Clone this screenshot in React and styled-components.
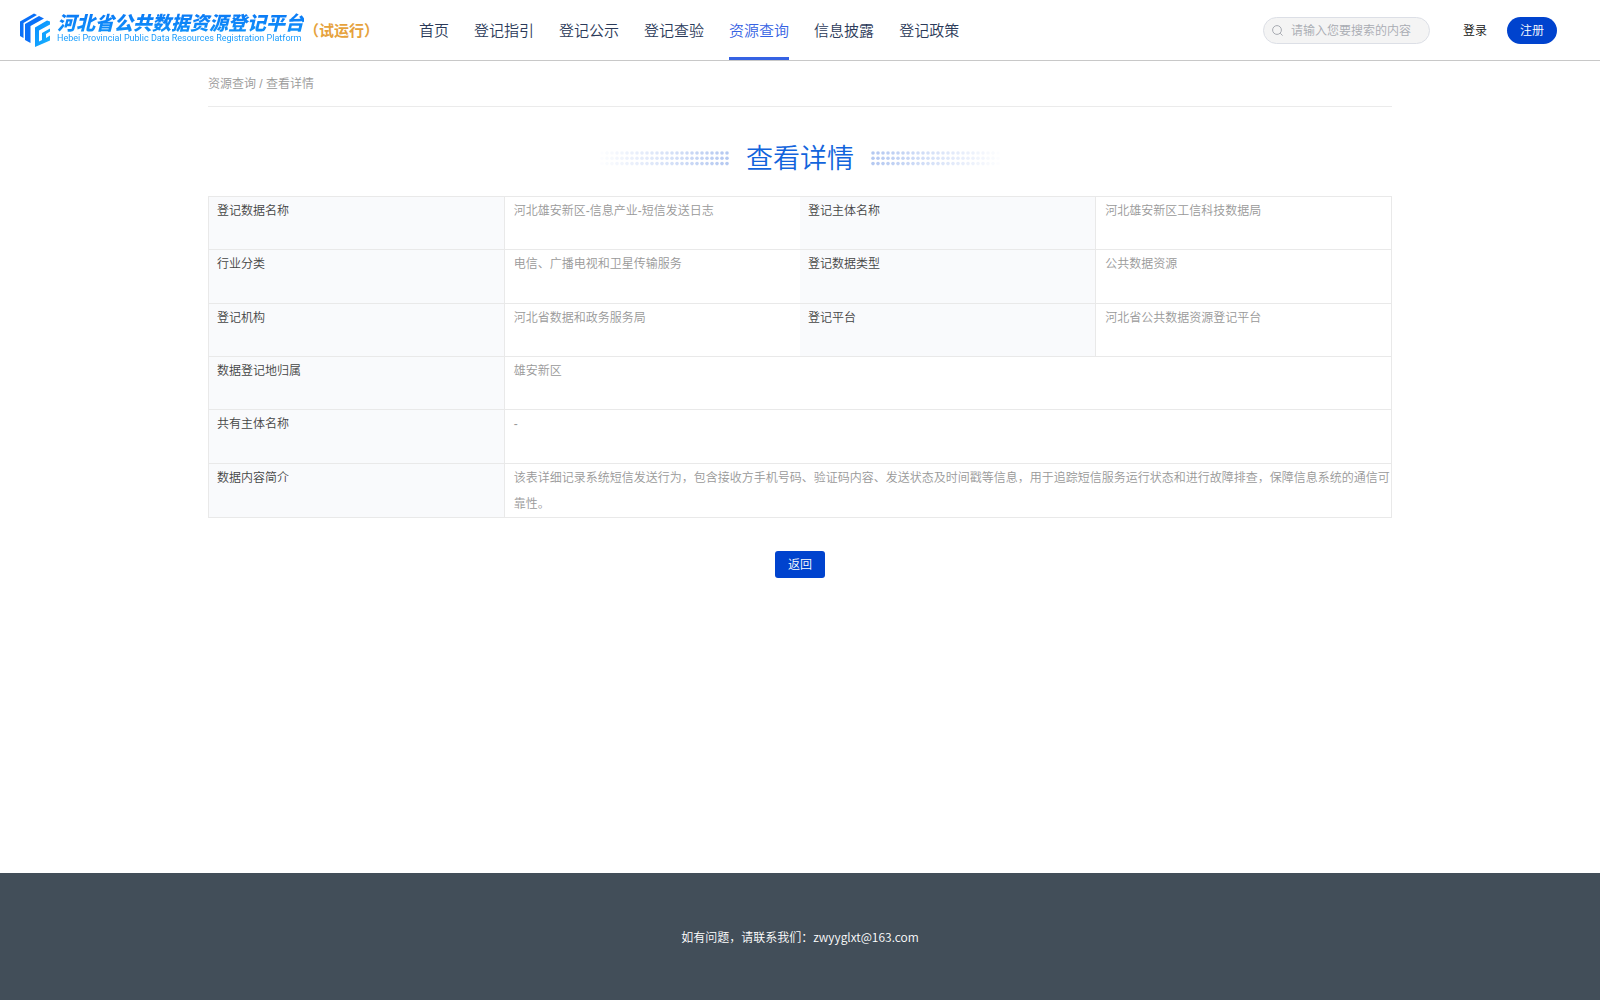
import React from "react";
import styled, { createGlobalStyle } from "styled-components";

const Global = createGlobalStyle`
  *, *::before, *::after { box-sizing: border-box; }
  body {
    margin: 0;
    background: #fff;
    color: #444;
    font: 350 12px/26px "Liberation Sans", "Noto Sans CJK SC", sans-serif;
  }
  button, input { font: inherit; }
  a { color: inherit; text-decoration: none; }
`;

const Page = styled.div`
  display: flex;
  flex-direction: column;
  min-height: 100vh;
`;

const Header = styled.header`
  display: flex;
  align-items: stretch;
  height: 61px;
  padding: 0 43px 0 20px;
  border-bottom: 1px solid #c8c8c8;
`;

const Brand = styled.a`
  display: flex;
  align-items: center;
`;

const LogoMark = styled.svg`
  width: 30px;
  height: 34px;
  margin-right: 7px;
`;

const BrandText = styled.span`
  display: flex;
  flex-direction: column;
  padding-bottom: 3px;
  white-space: nowrap;
  color: transparent;
  background: linear-gradient(#0a78f5, #14a5ff);
  background-clip: text;
`;

const BrandName = styled.span`
  font: italic 900 19px/20px "Noto Sans CJK SC", sans-serif;
`;

const BrandLatin = styled.span`
  font: 9px/13px Roboto, sans-serif;
`;

const Trial = styled.span`
  color: #e6a23c;
  font: 700 15px/22px "Noto Sans CJK SC", sans-serif;
`;

const Nav = styled.nav`
  display: flex;
  gap: 25px;
  margin-left: 40px;
`;

const NavLink = styled.a`
  display: flex;
  align-items: center;
  border-top: 3px solid transparent;
  border-bottom: 3px solid ${(p) => (p.$active ? "#3562e3" : "transparent")};
  color: ${(p) => (p.$active ? "#3562e3" : "#2b3a59")};
  font: 350 15px/22px "Noto Sans CJK SC", sans-serif;
  white-space: nowrap;
`;

const Account = styled.div`
  display: flex;
  align-items: center;
  margin-left: auto;
`;

const SearchBox = styled.label`
  display: flex;
  align-items: center;
  gap: 8px;
  width: 167px;
  height: 27px;
  margin-right: 20px;
  padding: 0 8px;
  border: 1px solid #dcdfe6;
  border-radius: 14px;
  background: #f4f4f4;
`;

const SearchInput = styled.input`
  flex: 1;
  min-width: 0;
  height: 24px;
  padding: 2px 0 0;
  border: 0;
  outline: 0;
  background: none;
  color: #606266;
  &::placeholder { color: #a8abb2; }
`;

const Button = styled.button`
  height: 27px;
  padding: 1px 13px 0;
  border: 0;
  border-radius: ${(p) => (p.$round ? "14px" : "3px")};
  background: ${(p) => (p.$plain ? "transparent" : "#0043ce")};
  color: ${(p) => (p.$plain ? "#111" : "#fff")};
  line-height: 26px;
  cursor: pointer;
`;

const AccountButtons = styled.div`
  display: flex;
  gap: 7px;
`;

const Main = styled.main`
  flex: 1;
  width: 74%;
  margin: 0 auto;
`;

const Breadcrumb = styled.nav`
  padding: 10px 0 9px;
  border-bottom: 1px solid #ebebeb;
  color: #999;
`;

const TitleRow = styled.div`
  display: flex;
  align-items: center;
  justify-content: center;
  gap: 17px;
  margin: 30px 0 17px;
`;

const Title = styled.h1`
  margin: 0;
  padding-top: 2px;
  color: #1264dc;
  font-size: 27px;
  font-weight: 350;
  line-height: 40px;
`;

const Table = styled.table`
  width: 100%;
  height: 322px;
  table-layout: fixed;
  border-collapse: collapse;
  border: 1px solid #e9e9e9;
`;

const Row = styled.tr`
  height: 53px;
`;

const Label = styled.th`
  padding: 1px 0 0 8px;
  border: solid #e9e9e9;
  border-width: 1px 0;
  background: #f9fafc;
  color: #444;
  font-weight: 350;
  text-align: left;
  vertical-align: top;
`;

const Value = styled.td`
  padding: 1px 0 0 9px;
  border: solid #e9e9e9;
  border-width: 1px 0 1px 1px;
  color: #999;
  vertical-align: top;
`;

const Actions = styled.div`
  display: flex;
  justify-content: center;
  padding: 33px 0;
`;

const Footer = styled.footer`
  padding: 51px 0 50px;
  background: #424e59;
  color: #fff;
  font-family: "Noto Sans CJK SC", sans-serif;
  text-align: center;
`;

const navItems = ["首页", "登记指引", "登记公示", "登记查验", "资源查询", "信息披露", "登记政策"];

const rows = [
  [["登记数据名称", "河北雄安新区-信息产业-短信发送日志"], ["登记主体名称", "河北雄安新区工信科技数据局"]],
  [["行业分类", "电信、广播电视和卫星传输服务"], ["登记数据类型", "公共数据资源"]],
  [["登记机构", "河北省数据和政务服务局"], ["登记平台", "河北省公共数据资源登记平台"]],
  [["数据登记地归属", "雄安新区"]],
  [["共有主体名称", "-"]],
  [["数据内容简介", "该表详细记录系统短信发送行为，包含接收方手机号码、验证码内容、发送状态及时间戳等信息，用于追踪短信服务运行状态和进行故障排查，保障信息系统的通信可靠性。"]],
];

function Logo() {
  return (
    <LogoMark viewBox="0 0 30 34" aria-hidden="true">
      <defs>
        <linearGradient id="mark" x1="0" y1="0" x2="1" y2="1">
          <stop offset="0" stopColor="#0a8cff" />
          <stop offset="1" stopColor="#18b4ff" />
        </linearGradient>
      </defs>
      <g fill="#0a70f8">
        <path d="M0 8.500 14 .5l3 1.500L3.500 10v15L0 23z" />
        <path d="M5 11 19 3l5 2.500L10.500 13v17L5 27z" />
      </g>
      <path fill="url(#mark)" d="M15 14.500 27 7.500l3 1v3l-11 6v11l3-1.500v-7l8-4.500v3l-4 2.500v4l4-2.500v5L15 34z" />
    </LogoMark>
  );
}

const COLUMNS = 26;

function Dots({ fadeLeft }) {
  const dots = [];
  for (let c = 0; c < COLUMNS; c++) {
    const strength = (fadeLeft ? c + 1 : COLUMNS - c) / COLUMNS;
    for (let r = 0; r < 3; r++) {
      dots.push(<circle key={`${c}-${r}`} cx={2 + c * 5} cy={2 + r * 5.3} r="1.8" opacity={strength * 0.35} />);
    }
  }
  return (
    <svg width="129" height="15" fill="#2a63d8" aria-hidden="true">{dots}</svg>
  );
}

export default function App() {
  return (
    <Page>
      <Global />
      <Header>
        <Brand href="#">
          <Logo />
          <BrandText>
            <BrandName>河北省公共数据资源登记平台</BrandName>
            <BrandLatin>Hebei Provincial Public Data Resources Registration Platform</BrandLatin>
          </BrandText>
          <Trial>（试运行）</Trial>
        </Brand>
        <Nav>
          {navItems.map((item) => (
            <NavLink key={item} href="#" $active={item === "资源查询"}>{item}</NavLink>
          ))}
        </Nav>
        <Account>
          <SearchBox>
            <svg width="11" height="11" viewBox="0 0 11 11" fill="none" stroke="#a8abb2" aria-hidden="true">
              <circle cx="5" cy="5" r="4.4" />
              <path d="M8.2 8.2 10.6 10.6" />
            </svg>
            <SearchInput aria-label="搜索" placeholder="请输入您要搜索的内容" />
          </SearchBox>
          <AccountButtons>
            <Button $plain>登录</Button>
            <Button $round>注册</Button>
          </AccountButtons>
        </Account>
      </Header>
      <Main>
        <Breadcrumb><a href="#">资源查询</a> / 查看详情</Breadcrumb>
        <TitleRow>
          <Dots fadeLeft />
          <Title>查看详情</Title>
          <Dots />
        </TitleRow>
        <Table>
          <colgroup><col /><col /><col /><col /></colgroup>
          <tbody>
            {rows.map((cells) => (
              <Row key={cells[0][0]}>
                {cells.map(([label, value]) => (
                  <React.Fragment key={label}>
                    <Label scope="row">{label}</Label>
                    <Value colSpan={cells.length === 1 ? 3 : 1}>{value}</Value>
                  </React.Fragment>
                ))}
              </Row>
            ))}
          </tbody>
        </Table>
        <Actions><Button>返回</Button></Actions>
      </Main>
      <Footer>如有问题，请联系我们：zwyyglxt@163.com</Footer>
    </Page>
  );
}
